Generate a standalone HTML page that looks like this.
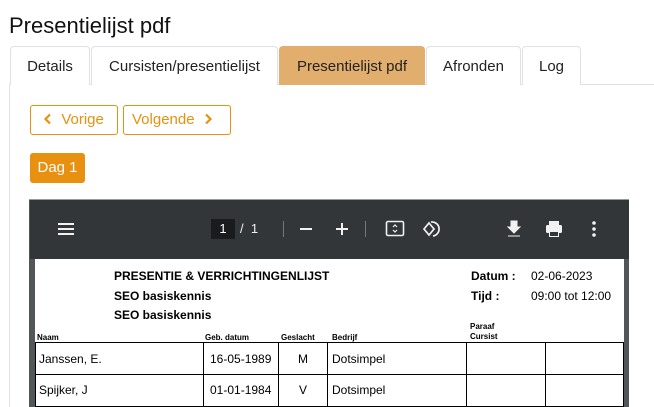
<!DOCTYPE html>
<html><head><meta charset="utf-8"><style>
*{box-sizing:border-box;margin:0;padding:0}
body{width:654px;height:407px;overflow:hidden;background:#fff;font-family:"Liberation Sans",Arial,sans-serif;color:#212529;position:relative}
.a{position:absolute}
h1{position:absolute;left:9px;top:13px;font-size:22px;font-weight:400;color:#111}
.tab{position:absolute;top:46px;height:39px;border:1px solid #dee2e6;border-bottom:none;border-radius:4px 4px 0 0;font-size:15px;line-height:40px;text-align:center;color:#222;background:#fff}
.btn{position:absolute;height:30px;border:1px solid #e8900f;border-radius:3px;color:#e8900f;font-size:15px;line-height:28px}
.pt{position:absolute;font-weight:bold;font-size:12px;color:#000}
.hd{position:absolute;font-weight:bold;font-size:8px;color:#000}
.cell{position:absolute;font-size:12px;color:#000}
.vl{position:absolute;width:1px;background:#000}
.hl{position:absolute;height:1px;background:#000;left:35px;width:589px}
</style></head><body>
<h1>Presentielijst pdf</h1>
<div class="a" style="left:9px;top:84px;width:645px;height:1px;background:#dee2e6"></div>
<div class="a" style="left:9px;top:84px;width:1px;height:323px;background:#dee2e6"></div>
<div class="tab" style="left:10px;width:80px">Details</div>
<div class="tab" style="left:91px;width:187px">Cursisten/presentielijst</div>
<div class="tab" style="left:279px;width:146px;background:#e2ae6e;border-color:#e2ae6e">Presentielijst pdf</div>
<div class="tab" style="left:426px;width:95px">Afronden</div>
<div class="tab" style="left:522px;width:59px">Log</div>
<div class="btn" style="left:30px;top:105px;width:88px;padding-left:12px"><svg width="10" height="12" viewBox="0 0 10 12" style="vertical-align:-1px"><path d="M7 1.5L2.5 6 7 10.5" fill="none" stroke="#e8900f" stroke-width="2.2"/></svg>&nbsp; Vorige</div>
<div class="btn" style="left:123px;top:105px;width:108px;padding-left:8px">Volgende &nbsp;<svg width="10" height="12" viewBox="0 0 10 12" style="vertical-align:-1px"><path d="M3 1.5L7.5 6 3 10.5" fill="none" stroke="#e8900f" stroke-width="2.2"/></svg></div>
<div class="a" style="left:30px;top:153px;width:55px;height:30px;background:#e8900f;border-radius:3px;color:#fff;font-size:15px;line-height:30px;text-align:center">Dag 1</div>
<div class="a" style="left:29px;top:199px;width:600px;height:208px;background:#525659;border-top:1px solid #999"></div>
<div class="a" style="left:30px;top:200px;width:599px;height:59px;background:#323639"></div>
<svg class="a" style="left:57px;top:221px" width="18" height="16"><path d="M1 3h16M1 8h16M1 13h16" stroke="#f1f1f1" stroke-width="2"/></svg>
<div class="a" style="left:211px;top:219px;width:24px;height:20px;background:#191b1c;color:#fff;font-size:13px;line-height:20px;text-align:center">1</div>
<div class="a" style="left:240px;top:219px;color:#f1f1f1;font-size:13px;line-height:20px">/&nbsp; 1</div>
<div class="a" style="left:283px;top:221px;width:1px;height:16px;background:#777"></div>
<svg class="a" style="left:298px;top:221px" width="16" height="16"><path d="M2 8h12" stroke="#f1f1f1" stroke-width="2"/></svg>
<svg class="a" style="left:334px;top:221px" width="16" height="16"><path d="M2 8h12M8 2v12" stroke="#f1f1f1" stroke-width="2"/></svg>
<div class="a" style="left:365px;top:221px;width:1px;height:16px;background:#777"></div>
<svg class="a" style="left:385px;top:220px" width="20" height="18"><rect x="1.5" y="1.5" width="17" height="14" rx="1.5" fill="none" stroke="#f1f1f1" stroke-width="1.6"/><path d="M8 7l2-2 2 2M8 10l2 2 2-2" fill="none" stroke="#f1f1f1" stroke-width="1.2"/></svg>
<svg class="a" style="left:421px;top:219px" width="20" height="20"><path d="M8 4l5 6-5 6-5-6z" fill="none" stroke="#f1f1f1" stroke-width="1.7"/><path d="M10 3a7 7 0 1 1 2 14" fill="none" stroke="#f1f1f1" stroke-width="1.7"/></svg>
<svg class="a" style="left:506px;top:220px" width="16" height="18"><path d="M5 1h6v6h3l-6 6-6-6h3z M2 16h12" fill="#f1f1f1" stroke="#f1f1f1" stroke-width="1"/></svg>
<svg class="a" style="left:545px;top:220px" width="18" height="18"><rect x="4" y="1" width="10" height="4" fill="#f1f1f1"/><rect x="1" y="5" width="16" height="8" rx="1.5" fill="#f1f1f1"/><rect x="4" y="11" width="10" height="6" fill="#f1f1f1"/><rect x="5" y="12" width="8" height="4" fill="#323639"/></svg>
<svg class="a" style="left:590px;top:220px" width="8" height="18"><circle cx="4" cy="3" r="1.8" fill="#f1f1f1"/><circle cx="4" cy="9" r="1.8" fill="#f1f1f1"/><circle cx="4" cy="15" r="1.8" fill="#f1f1f1"/></svg>
<div class="a" style="left:35px;top:259px;width:589px;height:148px;background:#fff"></div>
<div class="pt" style="left:114px;top:269px">PRESENTIE &amp; VERRICHTINGENLIJST</div>
<div class="pt" style="left:114px;top:289px">SEO basiskennis</div>
<div class="pt" style="left:114px;top:308px">SEO basiskennis</div>
<div class="pt" style="left:471px;top:269px">Datum :</div>
<div class="cell" style="left:531px;top:269px">02-06-2023</div>
<div class="pt" style="left:471px;top:289px">Tijd :</div>
<div class="cell" style="left:531px;top:289px">09:00 tot 12:00</div>
<div class="hd" style="left:37px;top:333px">Naam</div>
<div class="hd" style="left:205px;top:333px">Geb. datum</div>
<div class="hd" style="left:281px;top:333px">Geslacht</div>
<div class="hd" style="left:332px;top:333px">Bedrijf</div>
<div class="hd" style="left:470px;top:322px;line-height:10px">Paraaf<br>Cursist</div>
<div class="hl" style="top:342px"></div>
<div class="hl" style="top:374px"></div>
<div class="hl" style="top:406px"></div>
<div class="vl" style="left:35px;top:342px;height:65px"></div>
<div class="vl" style="left:203px;top:342px;height:65px"></div>
<div class="vl" style="left:278px;top:342px;height:65px"></div>
<div class="vl" style="left:327px;top:342px;height:65px"></div>
<div class="vl" style="left:466px;top:342px;height:65px"></div>
<div class="vl" style="left:545px;top:342px;height:65px"></div>
<div class="vl" style="left:623px;top:342px;height:65px"></div>
<div class="cell" style="left:39px;top:352px">Janssen, E.</div>
<div class="cell" style="left:210px;top:352px">16-05-1989</div>
<div class="cell" style="left:298px;top:352px">M</div>
<div class="cell" style="left:332px;top:352px">Dotsimpel</div>
<div class="cell" style="left:39px;top:383px">Spijker, J</div>
<div class="cell" style="left:210px;top:383px">01-01-1984</div>
<div class="cell" style="left:299px;top:383px">V</div>
<div class="cell" style="left:332px;top:383px">Dotsimpel</div>
</body></html>
